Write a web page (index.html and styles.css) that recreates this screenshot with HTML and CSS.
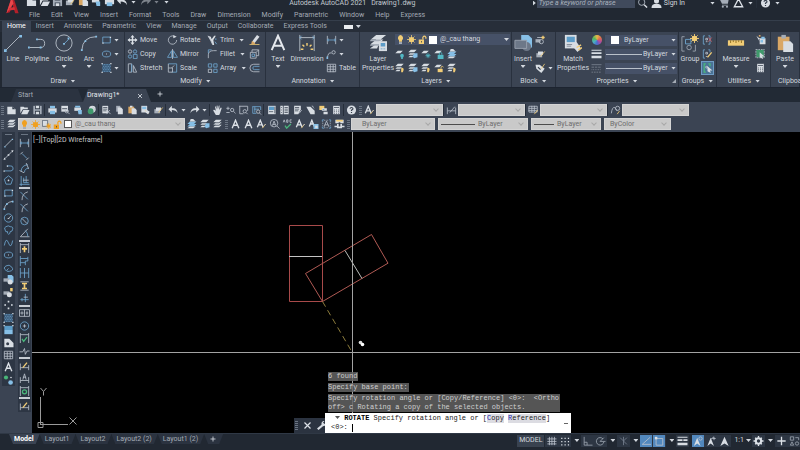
FILE: index.html
```html
<!DOCTYPE html>
<html lang="en">
<head>
<meta charset="utf-8">
<title>Autodesk AutoCAD 2021 - Drawing1.dwg</title>
<link rel="stylesheet" href="styles.css">
</head>
<body>
<svg class="sprite" aria-hidden="true">
  <!-- files and editing -->
  <symbol id="new" viewBox="0 0 12 12"><path class="fw" d="M1 2h6l4 3v6H1z"/><path class="fd" d="M7 2v3h4z"/></symbol>
  <symbol id="open" viewBox="0 0 12 12"><path class="fw" d="M1 2h4l1 1h4v2H4l-3 5z"/><path class="fw" d="M4.500 6H12l-2.500 5H2z"/></symbol>
  <symbol id="save" viewBox="0 0 12 12"><path class="fl" d="M1 1h10v10H1z"/><path class="fd" d="M3 1h6v4H3zM3 7h6v4H3z"/><path class="fw" d="M4 1h4v3H4zM4 8h4v3H4z"/></symbol>
  <symbol id="print" viewBox="0 0 12 12"><path class="fb" d="M3 1h6v3H3z"/><path class="fw" d="M1 4h10v5H1z"/><path class="fb" d="M3 7h6v4H3z"/></symbol>
  <symbol id="preview" viewBox="0 0 12 12"><path class="fw" d="M1 1h8v7H1z"/><path class="fd" d="M2 4h6v1H2z"/><circle class="s fd" cx="7.500" cy="7.500" r="2"/><path class="s" d="M9 9l2 2"/></symbol>
  <symbol id="publish" viewBox="0 0 12 12"><path class="fw" d="M1 3h8v4H1z"/><path class="fb" d="M2 1h6v2H2zM5 6h5v5H6z"/></symbol>
  <symbol id="globe" viewBox="0 0 12 12"><circle class="fw" cx="7" cy="5" r="4"/><circle class="fg" cx="5" cy="7.500" r="3.500"/><path class="s" d="M7 2q4 2 2 6"/></symbol>
  <symbol id="cut" viewBox="0 0 12 12"><path class="fw" d="M1 1h7v9H1z"/><path class="sd" d="M2 3h5M2 5h5M2 7h4"/><path class="s" d="M6 6l5 5M10 6l-4 5"/></symbol>
  <symbol id="copydoc" viewBox="0 0 12 12"><path class="fl" d="M2 1h5v7H2z"/><path class="fw" d="M4 3h4l2 2v6H4z"/></symbol>
  <symbol id="pastedoc" viewBox="0 0 12 12"><path class="fo" d="M1 2h7v8H1z"/><path class="fw" d="M3 1h3v2H3zM5 4h4l2 2v5H5z"/></symbol>
  <symbol id="match" viewBox="0 0 12 12"><path class="fw" d="M1 1h7v8H1z"/><path class="fb" d="M2 2h5v3H2z"/><path class="sy" d="M6 7l4 3"/><path class="fw" d="M8 6l3 2-2 3-3-2z"/></symbol>
  <symbol id="blockedit" viewBox="0 0 12 12"><path class="fl" d="M1 5h7v5H1z"/><path class="fw" d="M3 3h6v4H3z"/><path class="sy" d="M6 9l5-6"/></symbol>
  <symbol id="undo" viewBox="0 0 12 12"><path class="fw" d="M0 5l4-4v3q6-1 7 6Q9 6 4 6v3z"/></symbol>
  <symbol id="redo" viewBox="0 0 12 12"><path class="fw" d="M12 5L8 1v3Q2 3 1 10q2-4 7-4v3z"/></symbol>
  <symbol id="hand" viewBox="0 0 12 12"><path class="fw" d="M3 2q1-1 1 0l1 3V1q1-1 1 0l.500 4 1-4q1-1 1 0L8 6l2-3q1 0 1 1L9 10l-1 2H4L1 7V6q1-1 3 1z"/></symbol>
  <symbol id="zoomrt" viewBox="0 0 12 12"><path class="s" d="M1 4h4M3 2v4M1 9h4"/><circle class="s" cx="8" cy="6" r="2"/><path class="s" d="M9.500 7.500L12 10"/></symbol>
  <symbol id="zoomwin" viewBox="0 0 12 12"><path class="s" d="M1 1.500h10V7M1.500 1v9.500H6"/><circle class="s" cx="7.500" cy="7.500" r="2"/><path class="s" d="M9 9l2 2"/></symbol>
  <symbol id="zoomprev" viewBox="0 0 12 12"><path class="sb" d="M1 2h10v4M1.500 2v8H6M3 5h6M4 2v7"/><circle class="s" cx="8" cy="8" r="2"/><path class="s" d="M9.500 9.500l2 2"/></symbol>
  <symbol id="props" viewBox="0 0 12 12"><path class="fw" d="M2 1h9v10H2z"/><path class="fbd" d="M3 2h6v4H3z"/><path class="sd" d="M3 8h5M10 2v8"/></symbol>
  <symbol id="palette" viewBox="0 0 12 12"><path class="fw" d="M1 1h3v10H1zM5 1h6v10H5z"/><path class="sd" d="M2 3h1M2 6h1M2 9h1M6 3h4M6 5h4M6 7h4M6 9h4"/></symbol>
  <symbol id="sheet" viewBox="0 0 12 12"><path class="fw" d="M2 1h8v4L7 11H2z"/><path class="sd" d="M3 3h5M3 5h5M3 7h4"/><path class="s" d="M8 10l3-4"/></symbol>
  <symbol id="markup" viewBox="0 0 12 12"><path class="fw" d="M1 2h5l5 5v4H6z"/><path class="fl" d="M7 1h2l2 4z"/></symbol>
  <symbol id="dcenter" viewBox="0 0 12 12"><path class="fy" d="M1 1h6v5H1z"/><path class="fw" d="M4 4h6v3H4zM6 8h5v3H6z"/><path class="fbd" d="M5 5h2v1H5z"/></symbol>
  <symbol id="calc" viewBox="0 0 12 12"><path class="fw" d="M2 1h8v10H2z"/><path class="sd" d="M3 3h6M3 6h1M5.500 6h1M8 6h1M3 8h1M5.500 8h1M8 8h1M3 10h1M5.500 10h1M8 10h1"/></symbol>
  <symbol id="help" viewBox="0 0 12 12"><circle class="fw" cx="6" cy="6" r="5.500"/><path class="sd2" d="M4.200 4.500Q4.500 3 6 3t1.800 1.500Q7.800 5.500 6 6.200v1M6 8.500v1.200"/></symbol>
  <symbol id="layers" viewBox="0 0 12 12"><path class="fw" d="M4 1h7L8 4H1zM4 4h7L8 7H1zM4 7h7l-3 3H1z"/><path class="sd" d="M1 4.500h7L11 2M1 7.500h7L11 5"/></symbol>
  <symbol id="layersb" viewBox="0 0 12 12"><path class="fb" d="M4 3h8L9 6H1zM4 6h8L9 9H1z"/><path class="fw" d="M5 0h3l3 3H4z"/><path class="fw" d="M4 9h7l-3 2H1z"/></symbol>
  <symbol id="layery" viewBox="0 0 12 12"><path class="fw" d="M4 1h7L8 4H1zM3 5h6L7 7H1zM3 8h4l-1 2H1z"/><path class="fy" d="M8 6q3-1 3 2l-1 3H8z"/></symbol>
  <symbol id="layerb" viewBox="0 0 12 12"><path class="fw" d="M4 1h7L8 4H1zM3 5h6L7 7H1zM3 8h4l-1 2H1z"/><path class="fb" d="M8 5h4v5L8 11 6 9z"/></symbol>
  <symbol id="layer1" viewBox="0 0 12 12"><path class="fw" d="M4 2h6L7 5H1z"/><circle class="fc" cx="9" cy="8" r="2.200"/><path class="fc" d="M8 9h2v3H8z"/></symbol>
  <symbol id="layer1s" viewBox="0 0 12 12"><path class="fw" d="M4 2h6L7 5H1z"/><path class="sc" d="M9 5v6M6 8h6M7 6l4 4M11 6l-4 4"/></symbol>
  <symbol id="layer1l" viewBox="0 0 12 12"><path class="fw" d="M4 2h6L7 5H1z"/><path class="fc" d="M5 7h7v5H5z"/><path class="sc" d="M7 7V5q1.500-2 3 0v2"/></symbol>
  <symbol id="layer1y" viewBox="0 0 12 12"><path class="fw" d="M4 2h6L7 5H1z"/><path class="fy" d="M5 7h6v4H5z"/><path class="sy" d="M9 7V5q1.500-2 3 0"/></symbol>
  <symbol id="bulb" viewBox="0 0 12 12"><path class="fy" d="M6 0a4 4 0 0 1 2 7v2H4V7a4 4 0 0 1 2-7z"/><path class="fl" d="M4 9.500h4V12H4z"/></symbol>
  <symbol id="sun" viewBox="0 0 12 12"><circle class="fy" cx="6" cy="6" r="3.500"/><path class="sy" d="M6 0v12M0 6h12M2 2l8 8M10 2l-8 8"/></symbol>
  <symbol id="unlock" viewBox="0 0 12 12"><path class="fy" d="M1 6h7v6H1z"/><path class="sy2" d="M6.500 6V3q2-3 4 0v2"/><path class="fd" d="M4 8h1v2H4z"/></symbol>
  <symbol id="sunpage" viewBox="0 0 12 12"><path class="fw" d="M0 0h8v9H0z"/><path class="sd" d="M.500.500h7v8h-7z"/><circle class="fy" cx="9" cy="8" r="2"/><path class="sy" d="M9 4v8M5 8h7M6 5l6 6M12 5l-6 6"/></symbol>
  <symbol id="A" viewBox="0 0 12 12"><path class="s2" d="M2 11L6 1.500 10 11M3.500 7.500h5"/></symbol>
  <symbol id="Aedit" viewBox="0 0 12 12"><path class="s2" d="M1 10L4.500 1.500 8 10M2.500 7h4"/><path class="sy" d="M7 11l4-5"/><path class="s" d="M9 8l2-2"/></symbol>
  <symbol id="Afind" viewBox="0 0 12 12"><circle class="s" cx="5.500" cy="5" r="4.500"/><path class="s" d="M3.500 8l2-5.500 2 5.500M4 6.500h3M9 8.500l3 3"/></symbol>
  <symbol id="check" viewBox="0 0 12 12"><path class="s" d="M1 4l1-3 1 3M5 1v3h1.500V1zM11 1H9v3h2"/><path class="sg2" d="M3 8l2 3 5-5"/></symbol>
  <symbol id="Ascale" viewBox="0 0 12 12"><path class="s2" d="M1 9L4 1.500 7 9M2.500 6h3"/><path class="fb" d="M6 6h6v6H6z"/><path class="fw" d="M8 8h3v3H8z"/></symbol>
  <symbol id="Abox" viewBox="0 0 12 12"><path class="sb" d="M1 1h2M9 1h2v2M1 1v2M1 9v2h2M9 11h2V9"/><path class="s" d="M3 9.500l3-7 3 7M4 7h4"/><path class="s" stroke-dasharray="1 1" d="M1.500 3v6M10.500 3v6M3 1.500h6M3 10.500h6"/></symbol>
  <symbol id="Aconv" viewBox="0 0 12 12"><path class="fw" d="M1 1h10v4H1zM3 6h6v5H3z"/><path class="fy" d="M2 1h8v2H2z"/><path class="fw" d="M0 8h3v2H0zM9 8h3v2H9z"/><path class="fd" d="M5 4h2v5H5z"/></symbol>
  <symbol id="tableedit" viewBox="0 0 12 12"><path class="s" d="M.500 1.500h10v7h-10zM0 4h10M0 6.500h10M4 1v8M7 1v8"/><path class="sy" d="M7 11l4-5"/></symbol>
  <symbol id="mleader" viewBox="0 0 12 12"><path class="s" d="M1 10Q2 2 5 3l3 4"/><circle class="s" cx="8.500" cy="4" r="2.500"/><path class="sy" d="M8 11l3-4"/></symbol>
  <!-- draw -->
  <symbol id="line" viewBox="0 0 12 12"><path class="s" d="M1.500 10.500l9-9"/><path class="fb" d="M1 10h1.500v1.500H1zM10 1h1.500v1.500H10z"/></symbol>
  <symbol id="xline" viewBox="0 0 12 12"><path class="s" d="M2 10l8-8"/><path class="fw" d="M1 9l2 2-3 1zM9 1l3-1-1 3zM5 5h2v2H5z"/></symbol>
  <symbol id="pline" viewBox="0 0 12 12"><path class="sb" d="M1 9.500h8a3 3 0 0 0-1-6H4"/><path class="fw" d="M0 9h1.500v1.500H0zM4 3h1.500v1.500H4z"/></symbol>
  <symbol id="polygon" viewBox="0 0 12 12"><path class="sb" d="M6 1l5 4-2 6H3L1 5z"/><circle class="fw" cx="6" cy="6.500" r="1"/></symbol>
  <symbol id="rect" viewBox="0 0 12 12"><path class="sb" d="M1.500 2.500h9v7h-9z"/><path class="fw" d="M1 9h1.500v1.500H1zM10 2h1.500v1.500H10z"/></symbol>
  <symbol id="arc" viewBox="0 0 12 12"><path class="s" d="M1 11Q2 3 11 1.500"/><path class="fb" d="M0 10h2v2H0zM3 4h2v2H3zM10 1h2v2h-2z"/></symbol>
  <symbol id="circle" viewBox="0 0 12 12"><circle class="sb" cx="6" cy="6" r="5"/><path class="s" d="M6 6.500l3-3"/><path class="fw" d="M5 6h2v1H5z"/></symbol>
  <symbol id="cloud" viewBox="0 0 12 12"><path class="sb" d="M2 6Q0 3 3 2q3-2 5 0 4 0 3 3 0 3-3 3 0 3-2 3-2-1-1-3-3 1-3-2z"/></symbol>
  <symbol id="spline" viewBox="0 0 12 12"><path class="sb" d="M1 9Q3-2 6 6t5-3"/></symbol>
  <symbol id="ellipse" viewBox="0 0 12 12"><ellipse class="sb" cx="6" cy="6" rx="5" ry="3.500"/><path class="fw" d="M5.500 5.500h1v1h-1z"/></symbol>
  <symbol id="ellarc" viewBox="0 0 12 12"><path class="sb" d="M3 9Q-1 6 3 3.500T10 5 7 10 6 6.500"/></symbol>
  <symbol id="insert" viewBox="0 0 12 12"><path class="fb" d="M5 0h5l2 2v7H5z"/><path class="fl" d="M0 4h7v4H0z"/><circle class="fw" cx="8" cy="8.500" r="3"/></symbol>
  <symbol id="makeblock" viewBox="0 0 12 12"><path class="fl" d="M0 4h7v4H0z"/><circle class="fw" cx="7" cy="8" r="3"/><path class="fy" d="M8 0h3v4H8z"/></symbol>
  <symbol id="points" viewBox="0 0 12 12"><path class="fw" d="M5 1h2v2H5zM1 5h2v2H1zM9 5h2v2H9zM5 9h2v2H5z"/></symbol>
  <symbol id="hatch" viewBox="0 0 12 12"><path class="hatchbox" d="M1 1h10v10H1z"/><path class="sb" stroke-dasharray="1 1" d="M1 2h10M2 4h9M1 6h10M2 8h9M1 10h10"/><path class="fw" d="M0 0h1.500v1.500H0zM10.500 0H12v1.500h-1.500zM0 10.500h1.500V12H0zM10.500 10.500H12V12h-1.500z"/></symbol>
  <symbol id="grad" viewBox="0 0 12 12"><path class="fbd" d="M1 1h10v5H1z"/><path class="fb" d="M1 6h10v5H1z"/><path class="fw" d="M0 0h1.500v1.500H0zM10.500 0H12v1.500h-1.500z"/></symbol>
  <symbol id="region" viewBox="0 0 12 12"><path class="fw" d="M1 1h6l5 5v5H1z"/><circle class="fd" cx="5" cy="7" r="1.800"/></symbol>
  <symbol id="table" viewBox="0 0 12 12"><path class="s" d="M1 1.500h10v9H1zM1 4.500h10M1 7.500h10M4.500 2v9M8 2v9"/></symbol>
  <symbol id="addsel" viewBox="0 0 12 12"><circle class="fgb" cx="3" cy="3" r="2.500"/><circle class="fw" cx="9" cy="3" r="1"/><circle class="fb" cx="8.500" cy="9" r="2.800"/></symbol>
  <!-- modify -->
  <symbol id="move" viewBox="0 0 12 12"><path class="s2" d="M6 1v10M1 6h10"/><path class="fw" d="M6 0l2.500 3h-5zM6 12l2.500-3h-5zM0 6l3-2.500v5zM12 6L9 3.500v5z"/></symbol>
  <symbol id="copy" viewBox="0 0 12 12"><circle class="s" cx="3" cy="3" r="2"/><circle class="sb" cx="9" cy="3" r="2"/><circle class="sb" cx="3" cy="9" r="2"/><path class="sb" d="M7 6.500h4.500v5H7z"/></symbol>
  <symbol id="stretch" viewBox="0 0 12 12"><path class="s" d="M1 1h4v10H1zM7 3l4 8H7z"/><path class="sb" d="M5 1v10"/></symbol>
  <symbol id="rotate" viewBox="0 0 12 12"><path class="s" d="M8 1.500A5 5 0 1 0 11 6"/><path class="fw" d="M7 0l4 2-4 2z"/></symbol>
  <symbol id="mirror" viewBox="0 0 12 12"><path class="sb" d="M5 2v8H0zM7 2v8h5z"/><path class="s" d="M6 0v12"/></symbol>
  <symbol id="scale" viewBox="0 0 12 12"><path class="sb" d="M1 1h10v10H5"/><path class="s" d="M1 1v10h5V6H1M5 6l3-3"/></symbol>
  <symbol id="trim" viewBox="0 0 12 12"><path class="fw" d="M0 1l4 1 1 3 3-4h2L7 6l1 6H6L4 7z"/><path class="s" d="M1 1l5 10"/><path class="sb" d="M10 4v2M9 8l2 3"/></symbol>
  <symbol id="fillet" viewBox="0 0 12 12"><path class="s" d="M1 11V7q0-5 6-5h4"/><path class="sb" d="M1 5V1h4"/></symbol>
  <symbol id="array" viewBox="0 0 12 12"><path class="sb" d="M1 1h4v4H1zM7.500 1h4v4h-4zM7.500 7.500h4v4h-4z"/><path class="s" d="M1 7.500h4v4H1z"/></symbol>
  <symbol id="erase" viewBox="0 0 12 12"><path class="fw" d="M9 0l3 2-6 8-3-2z"/><path class="fo" d="M3 7l4 3-1 1H2z"/><path class="sy" d="M0 11.500h12"/></symbol>
  <symbol id="explode" viewBox="0 0 12 12"><path class="s" d="M1 4h7v7H1zM3 4V1h8v7H8M8 4l3-3"/><path class="sb" d="M3 6h3v3H3z"/></symbol>
  <symbol id="offset" viewBox="0 0 12 12"><path class="s" d="M12 1.500H5a4.500 4.500 0 0 0 0 9h7"/><path class="sb" d="M12 4H6a2 2 0 0 0 0 4h6"/></symbol>
  <!-- dimension -->
  <symbol id="dlin" viewBox="0 0 12 12"><path class="s" d="M1 1v10M11 1v10"/><path class="sb" d="M1 6h10M3 4.500L1 6l2 1.500M9 4.500L11 6 9 7.500"/></symbol>
  <symbol id="dali" viewBox="0 0 12 12"><path class="sb" d="M3 3l6 6"/><path class="s" d="M4 1L1 4M11 8l-3 3"/></symbol>
  <symbol id="darc" viewBox="0 0 12 12"><path class="sb" d="M2 10Q2 3 10 2M6 11q0-4 5-5"/><path class="s" d="M0 9l6 3M8 0l3 7"/></symbol>
  <symbol id="dord" viewBox="0 0 12 12"><path class="sb" d="M2 0v12M0 10h12M5 2v6h6M8 0v8"/><path class="s" d="M4 5h7"/></symbol>
  <symbol id="drad" viewBox="0 0 12 12"><path class="sb" d="M1 1l9 9"/><path class="s" d="M10 1Q3 3 3 11"/></symbol>
  <symbol id="ddia" viewBox="0 0 12 12"><circle class="sb" cx="6" cy="6" r="4.500"/><path class="s" d="M3 3l6 6"/></symbol>
  <symbol id="dang" viewBox="0 0 12 12"><path class="s" d="M10 1L1 10.500h11"/><path class="sb" d="M7 3q3 3 3 7"/></symbol>
  <symbol id="dquick" viewBox="0 0 12 12"><path class="s" d="M1 0v12M11 0v12M1 2h10"/><path class="fy" d="M5 4h2v2h2v2H7v3H5V8H3V6h2z"/></symbol>
  <symbol id="dbase" viewBox="0 0 12 12"><path class="sb" d="M1 0v12M1 3h9M1 8h6M10 1v5H7v5"/></symbol>
  <symbol id="dcont" viewBox="0 0 12 12"><path class="sb" d="M1 0v12M6 0v12M11 0v12M1 6h10"/></symbol>
  <symbol id="dspace" viewBox="0 0 12 12"><path class="s" d="M1 1h10M1 11h10"/><path class="fy" d="M3 2h6v2H7v4h2v2H3V8h2V4H3z"/></symbol>
  <symbol id="dbreak" viewBox="0 0 12 12"><path class="sb" d="M1 8h10M7 1v10M3 6v4"/><path class="s" d="M5 5h5"/></symbol>
  <symbol id="tol" viewBox="0 0 12 12"><path class="s" d="M0 2h12v8H0zM6 2v8M9 4v4M7.500 6h3M3 4v4M1 6h4"/></symbol>
  <symbol id="center" viewBox="0 0 12 12"><circle class="sb" cx="6" cy="6" r="5"/><path class="s" d="M6 4v4M4 6h4"/></symbol>
  <symbol id="inspect" viewBox="0 0 12 12"><path class="s" d="M1 0v12M11 0v12M1 2h10"/><path class="sg2" d="M3 7l2 3 4-5"/></symbol>
  <symbol id="jog" viewBox="0 0 12 12"><path class="s" d="M0 7h4l2-4 1 7 2-4h3"/></symbol>
  <symbol id="dedit" viewBox="0 0 12 12"><path class="s" d="M1 3v8M11 5v6M1 8h10"/><path class="sy2" d="M4 8l5-6"/></symbol>
  <symbol id="dstyle" viewBox="0 0 12 12"><path class="s" d="M1 3v8M11 3v8M1 7h10M4 9l6-7"/></symbol>
  <symbol id="dtedit" viewBox="0 0 12 12"><path class="s" d="M1 5v7M11 5v7M1 9h10M4 8l2-7 2 7M4 5h4"/></symbol>
  <symbol id="dupd" viewBox="0 0 12 12"><path class="s" d="M1 0v12M11 0v12M1 2h10"/><circle class="sg2" cx="6" cy="7" r="2.500"/></symbol>
  <symbol id="leader" viewBox="0 0 12 12"><path class="s" d="M1 11Q2 3 6 5"/><circle class="s" cx="8.500" cy="4" r="2"/><path class="fb" d="M0 9h2v3H0z"/></symbol>
  <!-- block, groups, utilities -->
  <symbol id="blk1" viewBox="0 0 12 12"><path class="fl" d="M0 5h6v4H0z"/><circle class="s" cx="7" cy="8" r="2.500"/><path class="s" d="M2 3h6"/><path class="sy2" d="M9 1v4M7 3h4"/></symbol>
  <symbol id="tag" viewBox="0 0 12 12"><path class="fw" d="M0 2h5l6 5-4 5-6-5z"/><path class="sd2" d="M3 5l3 3"/><path class="sy" d="M7 7l4-6"/></symbol>
  <symbol id="grpun" viewBox="0 0 12 12"><path class="sb" d="M3 1H1v10h2M7 1h2v10H7"/><path class="sr" d="M7 3l4 5M11 3L7 8"/><path class="s" d="M4 4h2v2H4zM4 8h2"/></symbol>
  <symbol id="grped" viewBox="0 0 12 12"><path class="sb" d="M3 1H1v10h2M7 1h2v3"/><path class="s" d="M4 4h2v2H4zM4 9h2"/><path class="sy2" d="M6 10l5-6"/></symbol>
  <symbol id="grpsel" viewBox="0 0 12 12"><path class="sg2" d="M4 1H2v10h2M7 1h2v3"/><path class="s" d="M4 4h2v2H4z"/><path class="fw" d="M6 4l6 5H9l1 3-4-2z"/></symbol>
  <symbol id="qsel" viewBox="0 0 12 12"><path class="fw" d="M1 1l5 4H4l1 3zM5 4h7v7H5z"/><path class="fb" d="M7 2h4v3H7zM6 6h3v3H6z"/><path class="fo" d="M4 0h2v2H4z"/></symbol>
  <symbol id="selall" viewBox="0 0 12 12"><path class="fg" d="M1 1h9v9H1z"/><path class="s" stroke-dasharray="2 1" d="M.500.500h10v10H.500z"/><path class="fw" d="M5 4l6 5H8l1 3-4-2z"/></symbol>
  <symbol id="lw" viewBox="0 0 12 12"><path class="fw" d="M0 1h12v1H0zM0 4h12v2H0zM0 8h12v3H0z"/></symbol>
  <symbol id="lt" viewBox="0 0 12 12"><path class="s" d="M0 2h12"/><path class="s" stroke-dasharray="3 1" d="M0 5h12"/><path class="s" stroke-dasharray="1 1" d="M0 8h12"/><path class="s" stroke-dasharray="2 1" d="M0 11h12"/></symbol>
  <!-- title and status bar -->
  <symbol id="search" viewBox="0 0 12 12"><circle class="s" cx="5" cy="5" r="3.800"/><path class="s2" d="M8 8l3.500 3.500"/></symbol>
  <symbol id="user" viewBox="0 0 12 12"><circle class="fw" cx="6" cy="3.500" r="3"/><path class="fw" d="M0 12q0-5 6-5t6 5z"/></symbol>
  <symbol id="cart" viewBox="0 0 12 12"><path class="fl" d="M0 1h2l1 1h8l-1 5H3zM3 8h7v1H3z"/><circle class="fl" cx="4" cy="10.500" r="1.300"/><circle class="fl" cx="9" cy="10.500" r="1.300"/></symbol>
  <symbol id="adsk" viewBox="0 0 12 12"><path class="s2" d="M6 1l5 9.500H1z"/></symbol>
  <symbol id="gridic" viewBox="0 0 12 12"><path class="s" d="M3.500 1v10M6.500 1v10M9.500 1v10M1 3.500h11M1 6.500h11M1 9.500h11"/></symbol>
  <symbol id="snap" viewBox="0 0 12 12"><path class="fw" d="M2 2h1.500v1.500H2zM6 2h1.500v1.500H6zM10 2h1.500v1.500H10zM2 6h1.500v1.500H2zM6 6h1.500v1.500H6zM10 6h1.500v1.500H10zM2 10h1.500v1.500H2zM6 10h1.500v1.500H6zM10 10h1.500v1.500H10z"/></symbol>
  <symbol id="ortho" viewBox="0 0 12 12"><path class="sl" d="M2 1v10h10M2 7.500h3.500V11"/></symbol>
  <symbol id="polar" viewBox="0 0 12 12"><path class="sl" d="M9 3.500a4.500 4.500 0 1 0 1 3.500M5.500 6.500H12M5.500 6.500L10 2"/></symbol>
  <symbol id="iso" viewBox="0 0 12 12"><path class="sdim" d="M2 2l8 8M6 1v10M6 6l4-4"/></symbol>
  <symbol id="otrack" viewBox="0 0 12 12"><path class="s" d="M11 1.500L1.500 10H12"/></symbol>
  <symbol id="osnap" viewBox="0 0 12 12"><path class="s" d="M2.500 3h8v8h-8z"/><path class="fw" d="M1 1h3v3H1z"/></symbol>
  <symbol id="lwt" viewBox="0 0 12 12"><path class="fw" d="M0 1h12v1H0zM0 4h6v2H0zM7 4h5v2H7zM0 8h12v3H0z"/></symbol>
  <symbol id="ann" viewBox="0 0 12 12"><path class="fw" d="M6 1l5 11-5-3-5 3z"/></symbol>
  <symbol id="annv" viewBox="0 0 12 12"><path class="fw" d="M5 2l4 10-4-3-4 3z"/><path class="s" d="M5 4l4-3M9 1v4M7 3h4"/></symbol>
  <symbol id="anns" viewBox="0 0 12 12"><path class="fw" d="M5 2l4 10-4-3-4 3z"/><circle class="s" cx="9" cy="3" r="2"/></symbol>
  <symbol id="gear" viewBox="0 0 12 12"><circle class="gear" cx="6" cy="6" r="3.200"/><path class="s2" d="M6 0v2M6 10v2M0 6h2M10 6h2M2 2l1.300 1.300M8.700 8.700L10 10M10 2L8.700 3.300M3.300 8.700L2 10"/></symbol>
  <symbol id="plus" viewBox="0 0 12 12"><path class="s2" d="M6 1v10M1 6h10"/></symbol>
  <symbol id="isolate" viewBox="0 0 12 12"><path class="sl" d="M1 1h4v4H1zM7 2h4v3M3 7l2 4H1z"/><circle class="sl" cx="9" cy="9" r="2"/></symbol>
  <symbol id="close" viewBox="0 0 12 12"><path class="s2" d="M2 2l8 8M10 2l-8 8"/></symbol>
  <symbol id="wrench" viewBox="0 0 12 12"><path class="fw" d="M0 10l6-5q-1-3 2-5h2L8 2l2 2 2-2v2q-1 3-4 3l-6 5z"/></symbol>
</svg>

<header class="top">
  <svg class="logo" viewBox="0 0 14 16"><path fill="#b3202a" d="M5 0h4l5 15h-4L7 5 4 14l-4 1z"/><path fill="#e8474b" d="M5 0h2l1 4-4 6-4 5z"/><path fill="#d4333a" d="M3 9l6-1 1 3-7 1z"/></svg>
  <div class="titlebar">
    <div class="quick">
      <svg class="i"><use href="#new"/></svg><svg class="i"><use href="#open"/></svg><svg class="i"><use href="#save"/></svg><svg class="i"><use href="#blockedit"/></svg><svg class="i"><use href="#pastedoc"/></svg><svg class="i"><use href="#publish"/></svg><svg class="i"><use href="#print"/></svg><svg class="i"><use href="#undo"/></svg><i class="caret"></i><svg class="i dim"><use href="#redo"/></svg><i class="caret dim"></i><i class="caret"></i>
    </div>
    <div class="title"><span>Autodesk AutoCAD 2021</span><span>Drawing1.dwg</span></div>
    <div class="account">
      <i class="play"></i>
      <input class="find" type="text" placeholder="Type a keyword or phrase" aria-label="Search help">
      <svg class="i"><use href="#search"/></svg><svg class="i"><use href="#user"/></svg>
      <a href="#signin">Sign In</a><i class="caret"></i>
      <svg class="i"><use href="#cart"/></svg><svg class="i"><use href="#adsk"/></svg><i class="caret"></i><i class="bar"></i>
      <svg class="i"><use href="#help"/></svg><i class="caret"></i>
    </div>
  </div>
  <nav class="menu">
    <a href="#file">File</a><a href="#edit">Edit</a><a href="#view">View</a><a href="#insert">Insert</a><a href="#format">Format</a><a href="#tools">Tools</a><a href="#draw">Draw</a><a href="#dimension">Dimension</a><a href="#modify">Modify</a><a href="#parametric">Parametric</a><a href="#window">Window</a><a href="#help">Help</a><a href="#express">Express</a>
  </nav>
</header>

<nav class="ribbon-tabs">
  <button class="on">Home</button><button>Insert</button><button>Annotate</button><button>Parametric</button><button>View</button><button>Manage</button><button>Output</button><button>Collaborate</button><button>Express Tools</button>
  <span class="pill"></span><i class="caret"></i>
</nav>

<main class="ribbon">
  <section class="panel draw">
    <div class="body">
      <button class="big w22"><svg viewBox="0 0 20 20"><path class="s" d="M2 18L18 2"/><path class="fb" d="M0 17h3v3H0zM17 1h3v3h-3z"/></svg>Line</button>
      <button class="big w26"><svg viewBox="0 0 20 20"><path class="s" d="M2 15h12a4.500 4.500 0 0 0 0-9h-3"/><path class="fb" d="M0 14h2v2H0zM9 5h2v2H9zM13 14h2v2h-2z"/></svg>Polyline</button>
      <button class="big w28"><svg viewBox="0 0 20 20"><circle class="s" cx="10" cy="10" r="9"/><path class="sb" d="M10 11l5-5"/><path class="fb" d="M9 10h2v2H9zM14 4h2v2h-2z"/></svg>Circle<i class="caret"></i></button>
      <button class="big w22"><svg viewBox="0 0 20 20"><path class="s" d="M2 18Q3 3 18 3"/><path class="fb" d="M1 17h2v2H1zM5 7h2v2H5zM17 2h2v2h-2z"/></svg>Arc<i class="caret"></i></button>
      <div class="stack">
        <button class="sm"><svg class="i"><use href="#rect"/></svg><i class="caret"></i></button>
        <button class="sm"><svg class="i"><use href="#ellipse"/></svg><i class="caret"></i></button>
        <button class="sm"><svg class="i"><use href="#hatch"/></svg><i class="caret"></i></button>
      </div>
    </div>
    <h2>Draw<i class="caret"></i></h2>
  </section>
  <section class="panel modify">
    <div class="body">
      <div class="stack w40">
        <button class="sm"><svg class="i"><use href="#move"/></svg>Move</button>
        <button class="sm"><svg class="i"><use href="#copy"/></svg>Copy</button>
        <button class="sm"><svg class="i"><use href="#stretch"/></svg>Stretch</button>
      </div>
      <div class="stack w40">
        <button class="sm"><svg class="i"><use href="#rotate"/></svg>Rotate</button>
        <button class="sm"><svg class="i"><use href="#mirror"/></svg>Mirror</button>
        <button class="sm"><svg class="i"><use href="#scale"/></svg>Scale</button>
      </div>
      <div class="stack w42">
        <button class="sm split"><svg class="i"><use href="#trim"/></svg>Trim<i class="caret"></i></button>
        <button class="sm split"><svg class="i"><use href="#fillet"/></svg>Fillet<i class="caret"></i></button>
        <button class="sm split"><svg class="i"><use href="#array"/></svg>Array<i class="caret"></i></button>
      </div>
      <div class="stack">
        <button class="sm" aria-label="Erase"><svg class="i"><use href="#erase"/></svg></button>
        <button class="sm" aria-label="Explode"><svg class="i"><use href="#explode"/></svg></button>
        <button class="sm" aria-label="Offset"><svg class="i"><use href="#offset"/></svg></button>
      </div>
    </div>
    <h2>Modify<i class="caret"></i></h2>
  </section>
  <section class="panel annotation">
    <div class="body">
      <button class="big w22"><svg viewBox="0 0 20 20"><path class="s3" d="M3 18L10 2l7 16M5.500 13h9"/></svg>Text<i class="caret"></i></button>
      <button class="big w36"><svg viewBox="0 0 20 20"><path class="s" d="M2 1v18M18 1v18M2 4h16"/><path class="sb" d="M4 2L2 4l2 2M16 2l2 2-2 2"/><path class="sy2" d="M10 10v3M5 12l2 2M15 12l-2 2M3 17h3M14 17h3"/></svg>Dimension</button>
      <div class="stack">
        <button class="sm"><svg class="i"><use href="#dlin"/></svg><i class="caret"></i></button>
        <button class="sm"><svg class="i"><use href="#leader"/></svg><i class="caret"></i></button>
        <button class="sm"><svg class="i"><use href="#table"/></svg>Table</button>
      </div>
    </div>
    <h2>Annotation<i class="caret"></i></h2>
  </section>
  <section class="panel layerpanel">
    <div class="body">
      <button class="big w30"><svg viewBox="0 0 20 20"><path class="fw" d="M8 1h11l-6 5H2zM8 6h8l-5 5H2zM8 11h3l-2 5H1z"/><path class="fl" d="M2 6h11v2H1zM2 11h9v2H1z"/><path class="fw" d="M11 8h9v11h-9z"/><path class="fbd" d="M13 10h5v4h-5zM13 16h2v1h-2zM16 16h2v1h-2z"/></svg>Layer<br>Properties</button>
      <div class="stack grow">
        <label class="combo lit"><svg class="i c9"><use href="#bulb"/></svg><svg class="i c9"><use href="#sun"/></svg><svg class="i c9"><use href="#unlock"/></svg><span class="sw"></span><select aria-label="Layer"><option>@_cau thang</option></select><i class="caret"></i></label>
        <div class="icons"><svg class="i"><use href="#layer1"/></svg><svg class="i"><use href="#layerb"/></svg><svg class="i"><use href="#layer1s"/></svg><svg class="i"><use href="#layer1l"/></svg><svg class="i"><use href="#layersb"/></svg></div>
        <div class="icons"><svg class="i"><use href="#layery"/></svg><svg class="i"><use href="#layerb"/></svg><svg class="i"><use href="#layery"/></svg><svg class="i"><use href="#layer1y"/></svg><svg class="i"><use href="#layery"/></svg></div>
      </div>
    </div>
    <h2>Layers<i class="caret"></i></h2>
  </section>
  <section class="panel block">
    <div class="body">
      <button class="big w22"><svg viewBox="0 0 20 20"><path class="fb" d="M8 1h8l4 4v10H8z"/><path class="fgrey" d="M1 7h13v9H1z"/><circle class="fgrey" cx="14" cy="14" r="5"/><path class="sl" d="M1 7h13v9H1z"/></svg>Insert<i class="caret"></i></button>
      <div class="stack">
        <button class="sm" aria-label="Create block"><svg class="i"><use href="#blk1"/></svg></button>
        <button class="sm" aria-label="Edit block"><svg class="i"><use href="#blockedit"/></svg></button>
        <button class="sm" aria-label="Edit attributes"><svg class="i"><use href="#tag"/></svg><i class="caret"></i></button>
      </div>
    </div>
    <h2>Block<i class="caret"></i></h2>
  </section>
  <section class="panel properties">
    <div class="body">
      <button class="big w34"><svg viewBox="0 0 20 20"><path class="fw" d="M1 1h13v15H1z"/><path class="fbd" d="M3 3h9v6H3z"/><path class="fgrey" d="M3 11h6v1H3zM3 13h5v1H3z"/><path class="fw" d="M9 13l5-4 5 7-4 4z"/><path class="sy2" d="M14 15l5-3M16 18l4-3"/></svg>Match<br>Properties</button>
      <div class="stack grow">
        <div class="prop"><span class="wheel"></span><label class="combo"><span class="sw first"></span><select aria-label="Object color"><option>ByLayer</option></select><i class="caret"></i></label></div>
        <div class="prop"><svg class="i"><use href="#lw"/></svg><label class="combo"><span class="rule"></span><select aria-label="Lineweight"><option>ByLayer</option></select><i class="caret"></i></label></div>
        <div class="prop"><svg class="i dim"><use href="#lt"/></svg><label class="combo"><span class="rule"></span><select aria-label="Linetype"><option>ByLayer</option></select><i class="caret"></i></label></div>
      </div>
    </div>
    <h2>Properties<i class="caret"></i></h2>
  </section>
  <section class="panel groups">
    <div class="body">
      <button class="big w22"><svg viewBox="0 0 20 20"><path class="sl" d="M4 3H1v16h3M13 19h3v-7"/><path class="sb" d="M5 6h6v5H5z"/><circle class="sl" cx="9" cy="15" r="2.500"/><path class="sy" d="M15 0v10M10 5h10M11.500 1.500l7 7M18.500 1.500l-7 7"/><circle class="fy" cx="15" cy="5" r="3"/></svg>Group</button>
      <div class="stack">
        <button class="sm" aria-label="Ungroup"><svg class="i"><use href="#grpun"/></svg></button>
        <button class="sm" aria-label="Group edit"><svg class="i"><use href="#grped"/></svg></button>
        <button class="sm pressed" aria-label="Group selection"><svg class="i"><use href="#grpsel"/></svg></button>
      </div>
    </div>
    <h2>Groups<i class="caret"></i></h2>
  </section>
  <section class="panel utilities">
    <div class="body">
      <button class="big w36"><svg viewBox="0 0 20 20"><path class="fy" d="M1 7h18v6H1z"/><path stroke="#8a6a20" d="M4 7v3M7 7v2M10 7v3M13 7v2M16 7v3"/></svg>Measure<i class="caret"></i></button>
      <div class="stack">
        <button class="sm" aria-label="Quick select"><svg class="i"><use href="#qsel"/></svg></button>
        <button class="sm" aria-label="Select all"><svg class="i"><use href="#selall"/></svg></button>
        <button class="sm" aria-label="Quick calculator"><svg class="i"><use href="#calc"/></svg></button>
      </div>
    </div>
    <h2>Utilities<i class="caret"></i></h2>
  </section>
  <section class="panel clipboard">
    <div class="body">
      <button class="big w26"><svg viewBox="0 0 20 20"><path class="fo" d="M2 3h13v15H2z"/><path class="fl" d="M6 1h5v4H6z"/><path class="fw" d="M8 8h8l3 3v9H8z"/></svg>Paste<i class="caret"></i></button>
    </div>
    <h2>Clipboard</h2>
  </section>
</main>

<nav class="files">
  <a href="#start" class="ftab"><span>Start</span></a>
  <a href="#drawing" class="ftab on"><span>Drawing1*</span><svg class="i c7"><use href="#close"/></svg></a>
  <button class="add" aria-label="New drawing"><svg class="i c7"><use href="#plus"/></svg></button>
</nav>

<div class="bars">
  <div class="bar-row">
    <i class="grip"></i>
    <svg class="i"><use href="#new"/></svg><svg class="i"><use href="#open"/></svg><svg class="i"><use href="#save"/></svg><i class="bar"></i>
    <svg class="i"><use href="#print"/></svg><svg class="i"><use href="#preview"/></svg><svg class="i"><use href="#publish"/></svg><svg class="i"><use href="#globe"/></svg><i class="bar"></i>
    <svg class="i"><use href="#cut"/></svg><svg class="i"><use href="#copydoc"/></svg><svg class="i"><use href="#pastedoc"/></svg><svg class="i"><use href="#match"/></svg><svg class="i"><use href="#blockedit"/></svg><i class="bar"></i>
    <svg class="i"><use href="#undo"/></svg><i class="caret"></i><svg class="i"><use href="#redo"/></svg><i class="caret"></i><i class="bar"></i>
    <svg class="i"><use href="#hand"/></svg><svg class="i"><use href="#zoomrt"/></svg><svg class="i"><use href="#zoomwin"/></svg><svg class="i"><use href="#zoomprev"/></svg><i class="bar"></i>
    <svg class="i"><use href="#props"/></svg><svg class="i"><use href="#palette"/></svg><svg class="i"><use href="#sheet"/></svg><svg class="i"><use href="#markup"/></svg><svg class="i"><use href="#dcenter"/></svg><svg class="i"><use href="#calc"/></svg><i class="bar"></i>
    <svg class="i"><use href="#help"/></svg><i class="grip"></i>
    <svg class="i"><use href="#Aedit"/></svg>
    <label class="combo light w67"><select aria-label="Text style"><option></option></select><i class="chev"></i></label><i class="bar"></i>
    <svg class="i"><use href="#dstyle"/></svg>
    <label class="combo light w67"><select aria-label="Dimension style"><option></option></select><i class="chev"></i></label><i class="bar"></i>
    <svg class="i"><use href="#tableedit"/></svg>
    <label class="combo light w67"><select aria-label="Table style"><option></option></select><i class="chev"></i></label><i class="bar"></i>
    <svg class="i"><use href="#mleader"/></svg>
    <label class="combo light w67"><select aria-label="Multileader style"><option></option></select><i class="chev"></i></label>
  </div>
  <div class="bar-row">
    <i class="grip"></i>
    <svg class="i"><use href="#layers"/></svg>
    <label class="combo light vivid w167"><svg class="i c9"><use href="#bulb"/></svg><svg class="i c9"><use href="#sun"/></svg><svg class="i c9"><use href="#sunpage"/></svg><svg class="i c9"><use href="#unlock"/></svg><span class="sw"></span><select aria-label="Current layer"><option>@_cau thang</option></select><i class="chev"></i></label>
    <svg class="i"><use href="#layersb"/></svg><svg class="i"><use href="#layerb"/></svg><svg class="i"><use href="#layers"/></svg><i class="grip"></i>
    <svg class="i"><use href="#A"/></svg><svg class="i"><use href="#A"/></svg><svg class="i"><use href="#Aedit"/></svg><svg class="i"><use href="#Afind"/></svg><svg class="i"><use href="#check"/></svg><svg class="i"><use href="#Aedit"/></svg><svg class="i"><use href="#Ascale"/></svg><svg class="i"><use href="#Abox"/></svg><svg class="i"><use href="#Aconv"/></svg><i class="grip"></i>
    <label class="combo light w84 inset"><select aria-label="Color"><option>ByLayer</option></select><i class="chev"></i></label>
    <label class="combo light w90"><span class="rule dark"></span><select aria-label="Linetype control"><option>ByLayer</option></select><i class="chev"></i></label>
    <label class="combo light w70"><span class="rule dark short"></span><select aria-label="Lineweight control"><option>ByLayer</option></select><i class="chev"></i></label>
    <label class="combo light w67 indent"><select aria-label="Plot style"><option>ByColor</option></select><i class="chev"></i></label>
  </div>
</div>

<div class="work">
  <aside class="tools">
    <div class="col one">
      <svg class="i"><use href="#line"/></svg><svg class="i"><use href="#xline"/></svg><svg class="i"><use href="#pline"/></svg><svg class="i"><use href="#polygon"/></svg><svg class="i"><use href="#rect"/></svg><svg class="i"><use href="#arc"/></svg><svg class="i"><use href="#circle"/></svg><svg class="i"><use href="#cloud"/></svg><svg class="i"><use href="#spline"/></svg><svg class="i"><use href="#ellipse"/></svg><svg class="i"><use href="#ellarc"/></svg><svg class="i"><use href="#insert"/></svg><svg class="i"><use href="#makeblock"/></svg><svg class="i"><use href="#points"/></svg><svg class="i"><use href="#hatch"/></svg><svg class="i"><use href="#grad"/></svg><svg class="i"><use href="#region"/></svg><svg class="i"><use href="#table"/></svg><svg class="i"><use href="#A"/></svg><svg class="i"><use href="#addsel"/></svg>
    </div>
    <div class="col two">
      <svg class="i"><use href="#dlin"/></svg><svg class="i"><use href="#dali"/></svg><svg class="i"><use href="#darc"/></svg><svg class="i"><use href="#dord"/></svg><hr>
      <svg class="i"><use href="#drad"/></svg><svg class="i"><use href="#drad"/></svg><svg class="i"><use href="#ddia"/></svg><svg class="i"><use href="#dang"/></svg><hr>
      <svg class="i"><use href="#dquick"/></svg><svg class="i"><use href="#dbase"/></svg><svg class="i"><use href="#dcont"/></svg><svg class="i"><use href="#dspace"/></svg><svg class="i"><use href="#dbreak"/></svg><hr>
      <svg class="i"><use href="#tol"/></svg><svg class="i"><use href="#center"/></svg><svg class="i"><use href="#inspect"/></svg><svg class="i"><use href="#jog"/></svg><hr>
      <svg class="i"><use href="#dedit"/></svg><svg class="i"><use href="#dtedit"/></svg><svg class="i"><use href="#dupd"/></svg><hr>
      <svg class="i"><use href="#dedit"/></svg>
    </div>
  </aside>
  <div class="canvas">
    <svg class="drawing">
      <text class="view" x="1" y="10">[−][Top][2D Wireframe]</text>
      <g fill="none">
        <path stroke="#a84a4a" d="M257.500 93.500h33v76h-33z"/>
        <path stroke="#c4c4c4" d="M257 124.500h33"/>
        <path stroke="#b05a54" d="M273.500 141.500L339.500 102.500 356 131.200 290.500 169.500z"/>
        <path stroke="#b8bcb8" d="M313 118.500l17 28"/>
        <path stroke="#8c7c3c" stroke-dasharray="6 4" d="M290.500 169.500L320 220"/>
        <path stroke="#9a9a9a" d="M8.500 265v27M8 292.500h28M6 290.500h5v5H6z"/>
      </g>
      <line class="cross" x1="320.500" y1="0" x2="320.500" y2="100%"/>
      <line class="cross" x1="0" y1="220.500" x2="100%" y2="220.500"/>
      <circle fill="#ddd" cx="328.500" cy="210.500" r="1.800"/><circle fill="#fff" cx="330.500" cy="212.500" r="1.800"/>
      <path class="axis" d="M8.500 256l3 3.500 3-3.500M11.500 259.500v4M37.500 285.500l7 7M44.500 285.500l-7 7"/>
    </svg>
    <div class="cli">
      <div class="history">
        <p>6 found</p>
        <p>Specify base point:</p>
        <p>Specify rotation angle or [Copy/Reference] &lt;0&gt;:  &lt;Ortho<br>off&gt; c Rotating a copy of the selected objects.</p>
      </div>
      <div class="prompt">
        <div class="handle"><i class="grip"></i><svg class="i c9"><use href="#close"/></svg><svg class="i c9"><use href="#wrench"/></svg></div>
        <div class="entry">
          <div><i class="caret"></i> <b>ROTATE</b> Specify rotation angle or [<button><em>C</em>opy</button> <button><em>R</em>eference</button>]</div>
          <label>&lt;0&gt;: <i class="beam"></i><input type="text" aria-label="Rotation angle"></label>
        </div>
        <i class="up"></i>
      </div>
    </div>
  </div>
</div>

<footer class="status">
  <nav class="sheets"><a href="#model" class="on">Model</a><a href="#l1">Layout1</a><a href="#l2">Layout2</a><a href="#l22">Layout2 (2)</a><a href="#l12">Layout1 (2)</a><a href="#add" aria-label="New layout"><svg class="i c7"><use href="#plus"/></svg></a></nav>
  <div class="modes">
    <button class="model">MODEL</button>
    <svg class="i"><use href="#gridic"/></svg><svg class="i"><use href="#snap"/></svg><i class="caret"></i>
    <svg class="i"><use href="#ortho"/></svg><svg class="i"><use href="#polar"/></svg><i class="caret"></i>
    <svg class="i"><use href="#iso"/></svg><i class="caret"></i>
    <svg class="i active"><use href="#otrack"/></svg><svg class="i active"><use href="#osnap"/></svg><i class="caret"></i>
    <svg class="i"><use href="#lwt"/></svg><span class="space"></span>
    <svg class="i active"><use href="#anns"/></svg><svg class="i"><use href="#annv"/></svg><svg class="i"><use href="#ann"/></svg>
    <button class="ratio">1:1</button><i class="caret"></i>
    <svg class="i"><use href="#gear"/></svg><i class="caret"></i>
    <svg class="i"><use href="#plus"/></svg><svg class="i"><use href="#isolate"/></svg>
  </div>
</footer>
</body>
</html>
```

FILE: styles.css
```css
* { box-sizing: border-box; }

:root {
  --deep: #212832;
  --panel: #3b4453;
  --field: #465167;
  --text: #d3d8df;
  --light: #d8dde3;
  --blue: #86bfe6;
  --yellow: #f2cd76;
}

body {
  margin: 0;
  min-height: 100vh;
  display: flex;
  flex-direction: column;
  overflow: hidden;
  background: var(--deep);
  color: var(--text);
  font: 7px/9px Roboto, "Liberation Sans", sans-serif;
}

a { color: inherit; text-decoration: none; }
button, input, select {
  margin: 0;
  padding: 0;
  border: 0;
  background: none;
  color: inherit;
  font: inherit;
  appearance: none;
  outline: 0;
}
h2, p { margin: 0; font: inherit; }

/* Icon palette */
.sprite { position: absolute; width: 0; height: 0; }
.fw { fill: var(--light); }
.fl { fill: #a5adb8; }
.fd { fill: #333c4a; }
.fb { fill: var(--blue); }
.fbd { fill: #5c9cc8; }
.fy { fill: var(--yellow); }
.fo { fill: #d9a765; }
.fg { fill: #3f9a6c; }
.fgb { fill: #49b478; }
.fc { fill: #52b8c4; }
.fgrey { fill: #6d7888; }
.hatchbox { fill: #3c5a78; }
.s, .s2, .s3, .sb, .sd, .sd2, .sy, .sy2, .sc, .sg2, .sl, .sr, .sdim, .gear { fill: none; }
.s { stroke: #b9c1cb; }
.s2 { stroke: #dde2e8; stroke-width: 1.6; }
.s3 { stroke: #e4e8ed; stroke-width: 2.2; }
.sb { stroke: #6fa6cf; }
.sd { stroke: #4a5462; }
.sd2 { stroke: #333c4a; stroke-width: 1.4; }
.sy { stroke: var(--yellow); }
.sy2 { stroke: var(--yellow); stroke-width: 1.6; }
.sc { stroke: #52b8c4; }
.sg2 { stroke: #4bb87c; stroke-width: 1.5; }
.sl { stroke: #9aa3af; }
.sr { stroke: #d0606a; }
.sdim { stroke: #76808f; }
.gear { stroke: #dde2e8; stroke-width: 2.4; }

.i { width: 13px; height: 12px; padding: 1px; flex: none; }
.i.c9 { width: 11px; height: 11px; padding: 1px; }
.i.c7 { width: 8px; height: 8px; padding: 1px; }
.dim { opacity: .5; }
.caret {
  flex: none;
  width: 5px;
  height: 3px;
  background: var(--text);
  clip-path: polygon(0 0, 100% 0, 50% 100%);
}
.bar { flex: none; width: 2px; height: 12px; border-left: 1px solid #262e3a; }
.grip {
  flex: none;
  width: 3px;
  height: 9px;
  margin: 0 1px;
  background: repeating-linear-gradient(#6b7583 0 1px, transparent 1px 2px);
}

/* Title bar and menu */
.top {
  display: grid;
  grid-template: 8px 12px / 25px 1fr;
  border-bottom: 1px solid #353e4b;
}
.logo { grid-row: 1 / 3; width: 15px; height: 14px; margin-left: 5px; }
.titlebar {
  display: flex;
  align-items: flex-end;
  justify-content: space-between;
  overflow: hidden;
  min-width: 0;
}
.quick, .account, .title { display: flex; align-items: center; height: 12px; }
.quick .i { margin-bottom: 1px; height: 13px; }
.quick .caret { margin: 0 3px 0 2px; }
.title { gap: 5px; height: 9px; padding-bottom: 1px; color: #c2c8d0; }
.account { gap: 1px; height: 10px; padding-right: 18px; }
.account .caret { margin: 0 2px; }
.account a + .caret { margin-left: 24px; }
.play { width: 3px; height: 5px; background: var(--text); clip-path: polygon(0 0, 100% 50%, 0 100%); }
.find { width: 98px; height: 10px; padding: 0 2px 1px; background: #404a5c; font-style: italic; }
.find::placeholder { color: #a9b1bd; opacity: 1; }
.menu { display: flex; gap: 11px; padding: 3px 0 0 4px; color: #a4abb5; }

.ribbon-tabs { display: flex; align-items: center; height: 11px; padding-left: 2px; background: #272e39; color: #a4abb5; }
.ribbon-tabs button { height: 11px; padding: 0 5px; }
.ribbon-tabs .on { background: var(--panel); color: #fff; }
.pill { width: 9px; height: 4px; margin: 0 3px 0 12px; background: #e9ecef; }

/* Ribbon */
.ribbon { display: flex; padding-left: 2px; border-bottom: 1px solid #1d2430; overflow: hidden; }
.panel { flex: none; padding-top: 1px; background: var(--panel); border-right: 1px solid #29313e; }
.body { display: flex; height: 42px; }
.panel h2 { display: flex; align-items: center; justify-content: center; gap: 4px; height: 12px; }
.draw { width: 123px; }
.modify { width: 141px; padding-left: 1px; }
.annotation { width: 94px; padding-left: 1px; }
.layerpanel { width: 152px; padding-left: 1px; }
.block { width: 44px; }
.properties { width: 123px; }
.properties h2 { position: relative; }
.properties h2::after {
  content: "";
  position: absolute;
  right: 2px;
  width: 4px;
  height: 4px;
  background: #a4abb5;
  clip-path: polygon(100% 0, 100% 100%, 0 100%);
}
.groups { width: 38px; }
.utilities { width: 54px; padding-left: 1px; }
.clipboard { flex: 1; min-width: 0; padding-left: 1px; }
.clipboard h2 { justify-content: flex-start; padding-left: 6px; }
.big { display: flex; flex-direction: column; align-items: center; text-align: center; flex: none; white-space: nowrap; }
.big svg { width: 18px; height: 18px; margin: 1px 0 3px; flex: none; }
.big br { display: block; }
.big .caret { margin-top: 1px; }
.stack { display: flex; flex-direction: column; flex: none; }
.grow { flex: 1; min-width: 0; }
.sm { display: flex; align-items: center; gap: 1px; height: 14px; white-space: nowrap; }
.split .caret { margin-left: 4px; }
.pressed { background: #4a7396; outline: 1px solid #6f9cc4; outline-offset: -1px; }
.icons { display: flex; align-items: center; height: 14px; }
.prop { display: flex; align-items: center; height: 14px; gap: 2px; }
.wheel { width: 10px; height: 10px; margin: 0 1px 0 2px; flex: none; border-radius: 50%; background: conic-gradient(#e8b84a, #e0704a, #b04aa0, #4a6ad0, #4ab0c0, #5ab85a, #e8b84a); }

.w22 { width: 22px; }
.w26 { width: 26px; }
.w28 { width: 28px; }
.w30 { width: 30px; margin-left: 2px; }
.w34 { width: 34px; }
.w36 { width: 36px; }
.w40 { width: 40px; }
.w42 { width: 42px; }

/* Drop-downs */
.combo { display: flex; align-items: center; flex: 1; min-width: 0; height: 11px; padding-right: 1px; background: var(--field); }
.combo select { flex: 1; min-width: 0; height: 11px; }
.combo.lit { flex: none; margin: 1px 1px 2px 2px; }
.sw { flex: none; width: 8px; height: 8px; margin: 0 3px 0 1px; background: #fff; }
.sw.first { margin: 0 5px 0 6px; }
.rule { flex: none; width: 36px; height: 1px; margin: 0 1px; background: #b9c0ca; }
.properties .combo { margin-right: 1px; }

.light { flex: none; height: 12px; background: #c9c9c9; border: 1px solid #d4d4d4; color: #6d6d6d; }
.vivid { --yellow: #f0a020; }
.vivid .sw { border: 1px solid #555; }
.chev { width: 4px; height: 4px; margin: 0 3px 2px 0; border: solid #a8a8a8; border-width: 0 1px 1px 0; transform: rotate(45deg); flex: none; }
.rule.dark { width: 34px; margin: 0 3px 0 2px; background: #4c4c4c; }
.rule.short { width: 20px; }
.inset select { padding-left: 10px; }
.indent select { padding-left: 5px; }
.w67 { width: 67px; }
.w70 { width: 70px; }
.w84 { width: 84px; }
.w90 { width: 90px; }
.w167 { width: 167px; }

/* File tabs */
.files { display: flex; height: 14px; padding: 1px 0 0 11px; background: #222a35; }
.ftab { display: flex; align-items: center; justify-content: space-between; width: 72px; padding: 0 7px; background: #2b3340; color: #a4abb5; clip-path: polygon(5px 0, calc(100% - 5px) 0, 100% 100%, 0 100%); }
.ftab.on { width: 68px; padding: 0 7px 0 4px; background: var(--panel); color: #e3e7ec; }
.add { padding: 0 5px; }

/* Toolbars */
.bars { background: var(--panel); padding: 1px 0; }
.bar-row { display: flex; align-items: center; height: 14px; }
.bar-row .caret { margin: 0 2px 0 1px; }
.bar-row .combo + .combo { margin-left: 3px; }

/* Work area */
.work { display: flex; flex: 1; }
.tools { display: flex; align-items: flex-start; gap: 3px; flex: none; width: 32px; padding: 0 2px; background: var(--panel); }
.col {
  display: flex;
  flex-direction: column;
  justify-content: space-between;
  padding-top: 5px;
  background: linear-gradient(90deg, transparent 3px, #6b7583 3px 10px, transparent 10px) 0 2px / 100% 1px no-repeat #2d3644;
}
.one { height: 254px; }
.two { height: 280px; }
.col hr { width: 11px; height: 2px; margin: 0 1px; border: 0; background: #c7ccd3; flex: none; }
.canvas { position: relative; flex: 1; min-width: 0; background: #000; }
.drawing { position: absolute; width: 100%; height: 100%; }
.view { fill: #c9c9c9; }
.cross { stroke: #a3a3a3; }
.axis { fill: none; stroke: #9a9a9a; }

/* Command line */
.cli { position: absolute; left: 262px; bottom: 0; font: 7px/9px "Liberation Mono", monospace; }
.history { display: flex; flex-direction: column; align-items: flex-start; gap: 2px; padding-left: 34px; margin-bottom: 1px; color: #cfcfcf; }
.history p { background: rgba(100, 100, 100, .85); white-space: pre; padding-right: 1px; }
.prompt { display: flex; align-items: flex-end; }
.handle { display: flex; align-items: center; gap: 3px; width: 31px; height: 15px; background: #2b3340; }
.entry { flex: none; width: 236px; height: 20px; padding: 1px 0 0 6px; background: #fff; color: #222; white-space: nowrap; }
.entry > div { padding-left: 4px; }
.entry .caret { display: inline-block; margin-bottom: 1px; background: #555; }
.entry b { color: #000; }
.entry button { background: #dcdce2; }
.entry em { font-style: normal; color: #2222b0; }
.entry label { display: flex; align-items: center; }
.entry input { flex: 1; min-width: 0; height: 9px; }
.beam { width: 1px; height: 8px; margin-left: 4px; background: #000; }
.up { width: 10px; height: 20px; background: linear-gradient(#666, #666) 3px 10px / 4px 1px no-repeat #fff; }

/* Status bar */
.status { display: flex; justify-content: space-between; height: 17px; flex: none; border-top: 1px solid #2f3845; }
.sheets { display: flex; height: 10px; padding-left: 9px; color: #a4abb5; }
.sheets a { display: flex; align-items: center; padding: 0 6px 0 5px; background: #2b3340; clip-path: polygon(0 0, 100% 0, calc(100% - 4px) 100%, 4px 100%); }
.sheets .on { background: var(--panel); color: #fff; font-weight: 700; }
.modes { display: flex; align-items: center; height: 13px; margin-right: -1px; }
.modes > * { flex: none; }
.modes .i { height: 12px; background: #2d3643; }
.modes .i.active { background: #5288bd; border: 1px solid #2d3643; border-width: 0 1px 0 0; }
.modes .caret { margin: 0 2px 0 3px; }
.modes .ratio + .caret { margin: 0 1px 0 2px; }
.model { height: 12px; margin-right: 1px; padding: 0 2px; background: #39424f; }
.space { width: 3px; }
.ratio { margin-left: 3px; }
```
